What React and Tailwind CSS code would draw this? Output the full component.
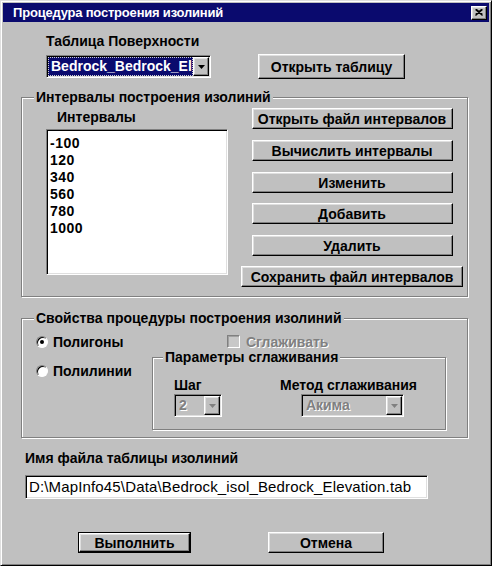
import React from "react";

const raised =
  "border border-t-white border-l-white border-r-black border-b-black shadow-[inset_-1px_-1px_0_#808080,inset_1px_1px_0_#dfdfdf]";
const sunken =
  "border border-t-[#808080] border-l-[#808080] border-r-white border-b-white shadow-[inset_1px_1px_0_#000,inset_-1px_-1px_0_#dfdfdf]";
const groupBox =
  "relative border border-[#808080] shadow-[inset_1px_1px_0_#fff,1px_1px_0_#fff]";

function Arrow({ disabled }) {
  return (
    <svg width="7" height="4" viewBox="0 0 7 4">
      <path d="M0 0h7L3.5 4z" fill={disabled ? "#808080" : "#000"} />
    </svg>
  );
}

function Btn({ children, className = "" }) {
  return (
    <div
      className={`${raised} flex items-center justify-center bg-[#c0c0c0] text-[14px] font-bold leading-[16px] text-black ${className}`}
    >
      {children}
    </div>
  );
}

function GroupLabel({ children, left = "left-[12px]" }) {
  return (
    <div
      className={`absolute -top-[9px] ${left} bg-[#c0c0c0] px-[2px] text-[14px] font-bold leading-[16px] text-black whitespace-nowrap`}
    >
      {children}
    </div>
  );
}

function Radio({ checked, label }) {
  return (
    <div className="flex items-center h-[16px]">
      <div className="w-[12px] h-[12px] rounded-full border border-t-[#808080] border-l-[#808080] border-r-white border-b-white bg-white shadow-[inset_1px_1px_0_#000] flex items-center justify-center">
        {checked && <div className="w-[4px] h-[4px] rounded-full bg-black" />}
      </div>
      <span className="ml-[5px] text-[14px] font-bold leading-[16px]">{label}</span>
    </div>
  );
}

function DisabledCombo({ value, width }) {
  return (
    <div className={`${sunken} ${width} h-[23px] p-[1px] flex bg-[#c0c0c0]`}>
      <div className="flex-1 pl-[3px] text-[14px] font-bold leading-[19px] text-[#808080] [text-shadow:1px_1px_0_#fff]">
        {value}
      </div>
      <div className={`${raised} w-[16px] flex items-center justify-center bg-[#c0c0c0]`}>
        <Arrow disabled />
      </div>
    </div>
  );
}

export default function App() {
  const intervals = ["-100", "120", "340", "560", "780", "1000"];
  return (
    <div className="font-['Liberation_Sans',Arial,sans-serif] w-[492px] h-[567px] bg-white">
      <div className="w-[492px] h-[566px] bg-[#c0c0c0] border border-t-[#dfdfdf] border-l-[#dfdfdf] border-r-black border-b-black shadow-[inset_1px_1px_0_#fff,inset_-1px_-1px_0_#808080] p-[2px] flex flex-col text-black">
        {/* Title bar */}
        <div className="h-[19px] bg-[#0a0a6e] flex items-center justify-between">
          <span className="pl-[10px] text-white text-[13px] font-bold leading-[16px] tracking-[-0.2px]">
            Процедура построения изолиний
          </span>
          <div className={`${raised} bg-[#c0c0c0] mr-[2px] w-[16px] h-[14px] flex items-center justify-center`}>
            <svg width="8" height="7" viewBox="0 0 8 7">
              <path d="M0.5 0.5L7.5 6.5M1.5 0.5L7.5 5.5M7.5 0.5L0.5 6.5M6.5 0.5L0.5 5.5" stroke="#000" strokeWidth="1.2" />
            </svg>
          </div>
        </div>

        {/* Surface table */}
        <div className="ml-[43px] mt-[11px] text-[14px] font-bold leading-[16px]">
          Таблица Поверхности
        </div>
        <div className="flex items-start mt-[5px] ml-[43px]">
          <div className={`${sunken} mt-[1px] w-[165px] h-[23px] p-[1px] flex bg-white`}>
            <div className="flex-1 min-w-0 overflow-hidden bg-[#0a0a6e] border border-dotted border-[#d0d0d0] text-white text-[14px] font-bold leading-[17px] pl-[2px] whitespace-nowrap">
              Bedrock_Bedrock_Elevation
            </div>
            <div className={`${raised} w-[16px] flex items-center justify-center bg-[#c0c0c0]`}>
              <Arrow />
            </div>
          </div>
          <Btn className="ml-[47px] w-[147px] h-[25px]">Открыть таблицу</Btn>
        </div>

        {/* Group 1 */}
        <div className={`${groupBox} mt-[18px] ml-[18px] w-[447px] h-[200px] flex`}>
          <GroupLabel>Интервалы построения изолиний</GroupLabel>
          <div className="ml-[24px] w-[182px] flex flex-col">
            <div className="ml-[11px] mt-[11px] text-[14px] font-bold leading-[16px]">Интервалы</div>
            <div className={`${sunken} mt-[4px] h-[146px] bg-white p-[1px]`}>
              <div className="pt-[4px] pl-[2px]">
                {intervals.map((v) => (
                  <div key={v} className="text-[14px] font-bold leading-[17px] tracking-[0.5px]">
                    {v}
                  </div>
                ))}
              </div>
            </div>
          </div>
          <div className="ml-[13px] w-[222px] flex flex-col items-center pt-[10px]">
            <Btn className="w-[201px] h-[21px]">Открыть файл интервалов</Btn>
            <Btn className="w-[201px] h-[21px] mt-[11px]">Вычислить интервалы</Btn>
            <Btn className="w-[201px] h-[21px] mt-[11px]">Изменить</Btn>
            <Btn className="w-[201px] h-[21px] mt-[10px]">Добавить</Btn>
            <Btn className="w-[201px] h-[21px] mt-[11px]">Удалить</Btn>
            <Btn className="w-[222px] h-[21px] mt-[10px]">Сохранить файл интервалов</Btn>
          </div>
        </div>

        {/* Group 2 */}
        <div className={`${groupBox} mt-[21px] ml-[18px] w-[447px] h-[120px] flex`}>
          <GroupLabel>Свойства процедуры построения изолиний</GroupLabel>
          <div className="ml-[14px] w-[116px] flex flex-col pt-[15px]">
            <Radio checked label="Полигоны" />
            <div className="mt-[13px]">
              <Radio label="Полилинии" />
            </div>
          </div>
          <div className="flex flex-col">
            <div className="flex items-center mt-[16px] ml-[75px] h-[13px]">
              <div className="w-[13px] h-[13px] border border-t-[#808080] border-l-[#808080] border-r-white border-b-white shadow-[inset_1px_1px_0_#a0a0a0] bg-[#c8c8c8]" />
              <span className="ml-[6px] text-[14px] font-bold leading-[16px] text-[#808080] [text-shadow:1px_1px_0_#fff]">
                Сглаживать
              </span>
            </div>
            <div className={`${groupBox} mt-[9px] w-[294px] h-[73px] flex`}>
              <GroupLabel left="left-[10px]">Параметры сглаживания</GroupLabel>
              <div className="ml-[21px] flex flex-col">
                <div className="mt-[19px] text-[14px] font-bold leading-[16px]">Шаг</div>
                <div className="mt-[1px]">
                  <DisabledCombo value="2" width="w-[48px]" />
                </div>
              </div>
              <div className="ml-[58px] flex flex-col">
                <div className="mt-[19px] text-[14px] font-bold leading-[16px] whitespace-nowrap">
                  Метод сглаживания
                </div>
                <div className="mt-[1px] ml-[21px]">
                  <DisabledCombo value="Акима" width="w-[103px]" />
                </div>
              </div>
            </div>
          </div>
        </div>

        {/* File name */}
        <div className="ml-[22px] mt-[12px] text-[14px] font-bold leading-[16px]">
          Имя файла таблицы изолиний
        </div>
        <div className={`${sunken} ml-[22px] mt-[9px] w-[403px] h-[24px] bg-white p-[1px] flex items-center`}>
          <span className="pl-[2px] text-[15px] leading-[18px] whitespace-nowrap tracking-[0.15px]">
            D:\MapInfo45\Data\Bedrock_isol_Bedrock_Elevation.tab
          </span>
        </div>

        {/* Bottom buttons */}
        <div className="flex mt-[33px]">
          <div className="ml-[75px] border border-black">
            <Btn className="w-[111px] h-[19px]">Выполнить</Btn>
          </div>
          <Btn className="ml-[77px] w-[116px] h-[21px]">Отмена</Btn>
        </div>
      </div>
    </div>
  );
}
